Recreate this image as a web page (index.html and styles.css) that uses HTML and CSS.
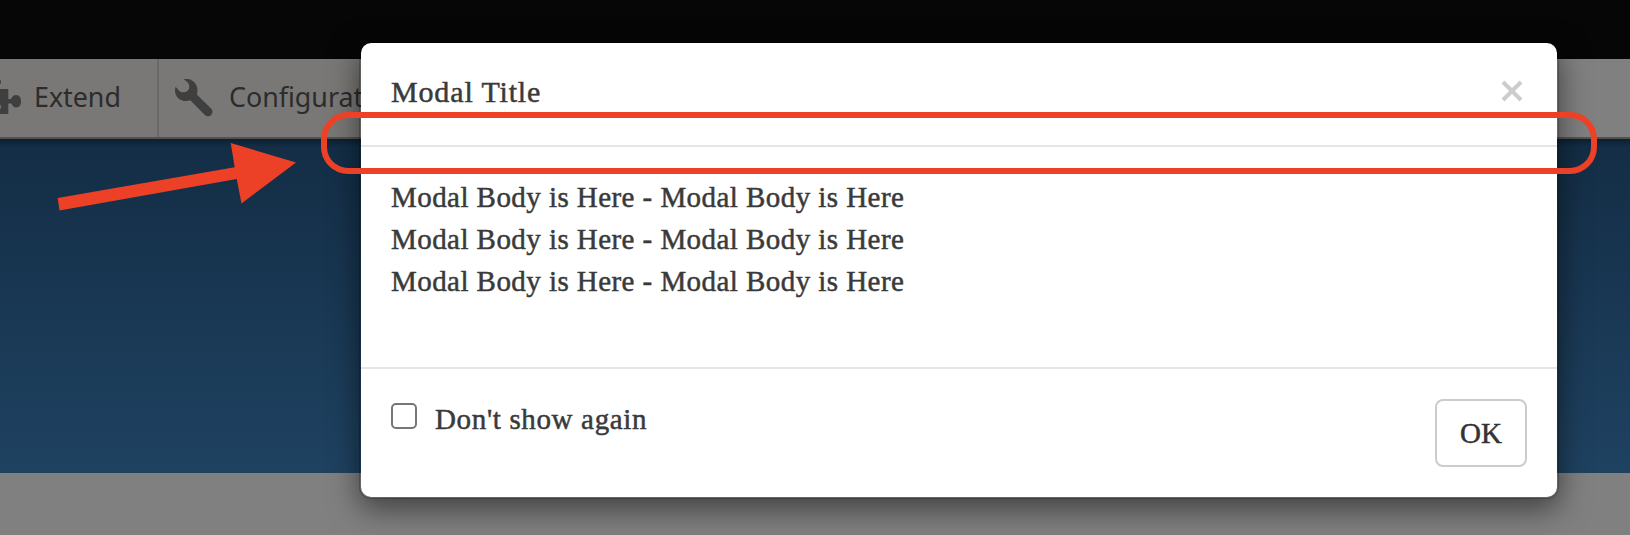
FILE: index.html
```html
<!DOCTYPE html>
<html lang="en">
<head>
<meta charset="utf-8">
<title>Modal Title</title>
<link rel="stylesheet" href="styles.css">
</head>
<body>
<div class="page">
  <div class="topbar"></div>
  <nav class="toolbar">
    <div class="tab tab-extend">
      <svg class="puzzle" width="22" height="40" viewBox="0 0 22 40"><path d="M0 1.500Q2 4 0 6.500ZM0 11H8.300V21H11C12 18.500 14 17 16 17C19.500 17 21 20 21 23.300C21 26.800 19.500 29.500 16 29.500C14 29.500 12.500 28 11.500 25.500H8.300V36H0V31.500Q2 29 0 26.500Z"/></svg>
      <span>Extend</span>
    </div>
    <div class="tab tab-config">
      <svg class="wrench" width="38" height="38" viewBox="0 0 38 38"><path d="M8.500 0C16-1.500 22.500 4 22.500 11C22.500 12.800 22.200 14.200 21.800 15.500L36 29.500C38 31.500 38 34 36.200 35.900C34.400 37.700 31.500 37.600 29.600 35.700L15.300 21.300C8 24 0 19.500 0 11.500C0 10 .2 9 .6 7.700L4.200 11.800C6.500 14.300 11.500 13.500 13.300 11C14.800 8.600 14.500 5.500 12.700 3.500Z"/></svg>
      <span>Configuration</span>
    </div>
  </nav>
  <div class="hero"></div>
  <div class="content"></div>
</div>
<section class="modal" role="dialog">
  <header class="modal-header">
    <h1 class="modal-title">Modal Title</h1>
    <svg class="close" width="22" height="22" viewBox="0 0 22 22"><path d="M2 2L20 20M20 2L2 20"/></svg>
  </header>
  <div class="modal-body">
    <p>Modal Body is Here - Modal Body is Here</p>
    <p>Modal Body is Here - Modal Body is Here</p>
    <p>Modal Body is Here - Modal Body is Here</p>
  </div>
  <footer class="modal-footer">
    <label class="dismiss"><input class="check" type="checkbox"><span class="dismiss-text">Don't show again</span></label>
    <button class="ok">OK</button>
  </footer>
</section>
<div class="highlight"></div>
<svg class="arrow" width="242" height="64" viewBox="0 0 242 64"><path d="M.7 55L177.700 24.300L173.700 0L239 19.400L184.500 60.500L179.700 36L2.500 67.500Z"/></svg>
</body>
</html>
```
FILE: styles.css
```css
* { box-sizing: border-box; }
body {
  margin: 0;
  height: 535px;
  position: relative;
  overflow: hidden;
  background: #808080;
  color: #3a3a3a;
  font: 29px/42px "Liberation Serif", serif;
}
.page { display: flex; flex-direction: column; height: 535px; }
.topbar { height: 59px; background: #060606; }
.toolbar {
  display: flex;
  height: 80px;
  border-bottom: 2px solid #535251;
  color: #2c2c2c;
  font: 26.8px/76px "Noto Sans", sans-serif;
}
.tab { display: flex; background: #797876; white-space: nowrap; }
.tab svg { fill: #3f3f3f; flex: none; }
.tab-extend { width: 159px; border-right: 2px solid #6a6968; gap: 12px; }
.tab-config { width: 1398px; padding-left: 16px; gap: 16px; }
.puzzle { margin-top: 19px; }
.wrench { margin-top: 20px; }
.hero {
  height: 334px;
  background:
    linear-gradient(rgba(0, 0, 0, .3), transparent 8px),
    linear-gradient(#132d45, #1f4261);
}
.content { flex: 1; }
.modal {
  position: absolute;
  left: 359px;
  top: 41px;
  width: 1200px;
  height: 458px;
  display: flex;
  flex-direction: column;
  border: 2px solid rgba(0, 0, 0, .2);
  border-radius: 12px;
  background: #fff;
  background-clip: padding-box;
  box-shadow: 0 10px 30px rgba(0, 0, 0, .5);
  -webkit-text-stroke: .5px currentColor;
}
.modal-header {
  display: flex;
  justify-content: space-between;
  height: 104px;
  padding: 28px 34px 0 30px;
  border-bottom: 2px solid #e5e5e5;
}
.modal-title { margin: 0; font: inherit; font-size: 30px; letter-spacing: .85px; }
.close { margin-top: 9px; fill: none; stroke: #ccc; stroke-width: 4; }
.modal-body { height: 220px; padding: 29px 30px 0; letter-spacing: .44px; }
.modal-body p { margin: 0; }
.modal-footer {
  display: flex;
  flex: 1;
  align-items: flex-start;
  justify-content: space-between;
  padding: 30px;
  border-top: 2px solid #e5e5e5;
}
.dismiss { display: flex; gap: 18px; letter-spacing: .65px; }
.dismiss-text { margin-top: -1px; }
.check {
  appearance: none;
  width: 26px;
  height: 26px;
  margin: 4px 0 0;
  border: 2px solid #767676;
  border-radius: 5px;
  background: #fff;
}
.ok {
  width: 92px;
  height: 68px;
  padding: 0;
  border: 2px solid #ccc;
  border-radius: 8px;
  background: #fff;
  color: #333;
  font: inherit;
  -webkit-text-stroke: .5px currentColor;
}
.highlight {
  position: absolute;
  left: 321px;
  top: 112px;
  width: 1276px;
  height: 62px;
  border: 6px solid #ec4126;
  border-radius: 27px;
}
.arrow { position: absolute; left: 57px; top: 143px; fill: #ec4126; overflow: visible; }
```
